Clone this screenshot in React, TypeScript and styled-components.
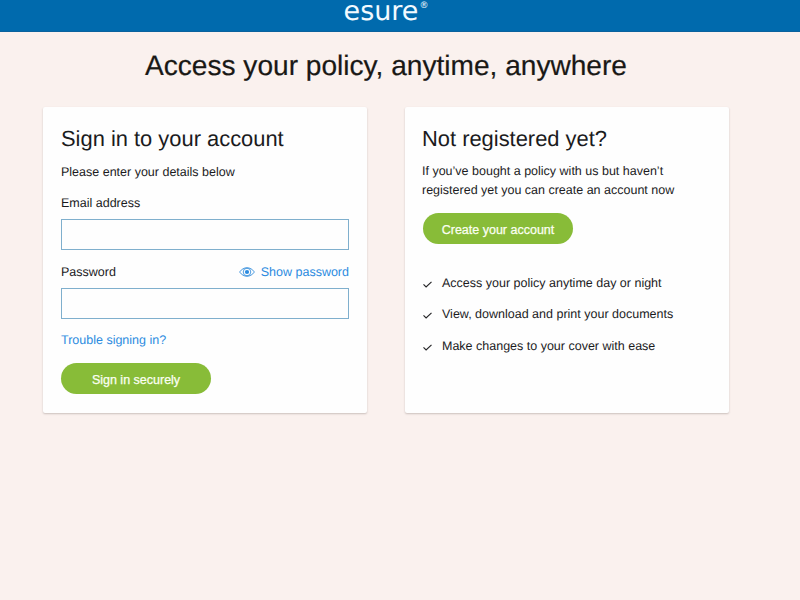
import React from 'react';
import styled, { createGlobalStyle } from 'styled-components';

const GlobalStyle = createGlobalStyle`
  * { box-sizing: border-box; }
  body {
    margin: 0;
    background: #faf1ee;
    color: #1b1b1d;
    font: 12.5px/18px "Liberation Sans", Arial, sans-serif;
    text-rendering: geometricPrecision;
  }
`;

const Page = styled.div`
  width: 800px;
  height: 600px;
  background: #faf1ee;
`;

const Header = styled.header`
  display: flex;
  justify-content: center;
  height: 32px;
  padding-right: 28px;
  background: #006aad;
  border-bottom: 1px solid #0a629d;
`;

const Logo = styled.div`
  display: flex;
  color: #f2faff;
  font: 27px/24px "DejaVu Sans", sans-serif;
  height: 24px;
`;

const Registered = styled.span`
  font-size: 9px;
  line-height: 12px;
  margin-left: 1px;
`;

const Title = styled.h1`
  margin: 17px 0 25px 145px;
  color: #191815;
  font-size: 28.1px;
  font-weight: 400;
  line-height: 33px;
  white-space: nowrap;
  -webkit-text-stroke: 0.2px currentColor;
`;

const Cards = styled.main`
  display: grid;
  grid-template-columns: 324px 324px;
  column-gap: 38px;
  margin-left: 43px;
`;

const Card = styled.section<{ $inset: number }>`
  display: flex;
  flex-direction: column;
  align-items: flex-start;
  height: 306px;
  padding: 19px 18px 0 ${(p) => p.$inset}px;
  background: #fefefe;
  border-radius: 2px;
  box-shadow: 0 1px 2px rgba(80, 65, 60, 0.28);
`;

const Heading = styled.h2`
  margin: 0 0 11px;
  font-size: 21.9px;
  font-weight: 400;
  line-height: 26px;
`;

const Intro = styled.p`
  margin: 0 0 13px;
`;

const Pitch = styled.p`
  margin: -1px 0 13px;
  line-height: 19px;
  white-space: nowrap;
`;

const FieldHeader = styled.div`
  display: flex;
  justify-content: space-between;
  width: 288px;
  margin-bottom: 7px;
`;

const Input = styled.input`
  display: block;
  width: 288px;
  height: 31px;
  margin: 0 0 13px;
  padding: 0 8px;
  border: 1px solid #7fafcd;
  border-radius: 0;
  background: #fefefe;
  outline: none;
`;

const ShowPassword = styled.span`
  display: flex;
  align-items: center;
  gap: 6px;
  color: #2b8be0;
`;

const Link = styled.a`
  color: #2b8be0;
  margin: -1px 0 14px;
`;

const Button = styled.button<{ $offset?: number }>`
  width: 150px;
  height: 31px;
  margin: 0 0 0 ${(p) => p.$offset ?? 0}px;
  padding: 2px 0 0;
  border: 0;
  border-radius: 16px;
  background: #88bc38;
  color: #fbfff2;
  font: inherit;
  -webkit-text-stroke: 0.25px currentColor;
`;

const Benefits = styled.ul`
  display: flex;
  flex-direction: column;
  gap: 13.3px;
  margin: 30px 0 0;
  padding: 0;
  list-style: none;
`;

const Benefit = styled.li`
  display: flex;
  gap: 9px;
  white-space: nowrap;
`;

const CheckIcon = () => (
  <svg width="11" height="18" viewBox="0 0 11 18" fill="none" stroke="#242426" strokeWidth="1.15">
    <path d="M1.5 10.4 4.1 12.9 9.5 7.8" />
  </svg>
);

const EyeIcon = () => (
  <svg width="16" height="12" viewBox="0 0 16 12" fill="none" stroke="#3a91dc" strokeWidth="0.9">
    <path d="M.6 6C4.5.3 11.5.3 15.4 6 11.5 11.7 4.5 11.7.6 6Z" />
    <circle cx="8" cy="6" r="3.8" />
    <circle cx="8" cy="6" r="2.1" fill="#2b8be0" stroke="none" />
  </svg>
);

const benefits = [
  'Access your policy anytime day or night',
  'View, download and print your documents',
  'Make changes to your cover with ease',
];

export default function App() {
  return (
    <Page>
      <GlobalStyle />
      <Header>
        <Logo>
          esure<Registered>®</Registered>
        </Logo>
      </Header>
      <Title>Access your policy, anytime, anywhere</Title>
      <Cards>
        <Card $inset={18}>
          <Heading>Sign in to your account</Heading>
          <Intro>Please enter your details below</Intro>
          <FieldHeader>
            <label htmlFor="email">Email address</label>
          </FieldHeader>
          <Input id="email" type="email" />
          <FieldHeader>
            <label htmlFor="password">Password</label>
            <ShowPassword>
              <EyeIcon />
              Show password
            </ShowPassword>
          </FieldHeader>
          <Input id="password" type="password" />
          <Link>Trouble signing in?</Link>
          <Button>Sign in securely</Button>
        </Card>
        <Card $inset={17}>
          <Heading>Not registered yet?</Heading>
          <Pitch>
            If you’ve bought a policy with us but haven’t
            <br />
            registered yet you can create an account now
          </Pitch>
          <Button $offset={1}>Create your account</Button>
          <Benefits>
            {benefits.map((text) => (
              <Benefit key={text}>
                <CheckIcon />
                {text}
              </Benefit>
            ))}
          </Benefits>
        </Card>
      </Cards>
    </Page>
  );
}
